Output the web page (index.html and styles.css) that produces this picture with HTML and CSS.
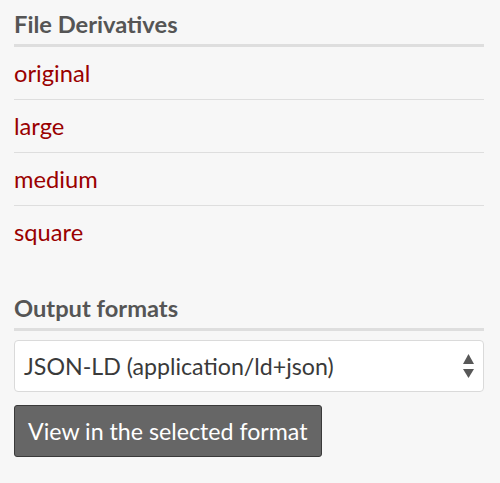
FILE: index.html
```html
<!DOCTYPE html>
<html lang="en">
<head>
<meta charset="utf-8">
<title>File Derivatives</title>
<link rel="stylesheet" href="styles.css">
</head>
<body>
<div class="panel">
  <section class="block">
    <h2 class="block-title">File Derivatives</h2>
    <ul class="derivs">
      <li class="deriv"><a href="#">original</a></li>
      <li class="deriv"><a href="#">large</a></li>
      <li class="deriv"><a href="#">medium</a></li>
      <li class="deriv"><a href="#">square</a></li>
    </ul>
  </section>
  <section class="block">
    <h2 class="block-title">Output formats</h2>
    <form class="format-form">
      <div class="select-wrap">
        <div class="select">JSON-LD (application/ld+json)</div>
        <svg class="arrows" width="11" height="25" viewBox="0 0 11 25"><polygon points="5.5,0 11,10 0,10" fill="#585858"/><polygon points="0,15 11,15 5.5,24" fill="#585858"/></svg>
      </div>
      <div class="actions"><button type="button" class="btn">View in the selected format</button></div>
    </form>
  </section>
</div>
</body>
</html>
```
FILE: styles.css
```css
html, body { margin: 0; padding: 0; }
body {
  background: #f7f7f7;
  font-family: Lato, "Open Sans", sans-serif;
  width: 500px;
  height: 483px;
  overflow: hidden;
}
.panel { padding: 10px 16px 0 14px; display: flex; flex-direction: column; gap: 36px; }
.block-title {
  margin: 0;
  font-size: 23.7px;
  font-weight: 700;
  color: #555;
  line-height: 28px;
  padding-bottom: 6px;
  border-bottom: 3px solid #dedede;
}
.derivs { list-style: none; margin: 0; padding: 0; }
.deriv {
  height: 52px;
  display: flex;
  align-items: center;
  border-bottom: 1px solid #dedede;
}
.deriv:last-child { border-bottom: none; }
.deriv a { color: #9a0000; text-decoration: none; font-size: 23.7px; }
.format-form { display: flex; flex-direction: column; gap: 13px; margin-top: 9px; }
.select-wrap { position: relative; }
.select {
  box-sizing: border-box;
  height: 52px;
  background: #fff;
  border: 1px solid #dadada;
  border-radius: 4px;
  display: flex;
  align-items: center;
  padding-left: 9px;
  font-size: 23.2px;
  color: #3a3a3a;
}
.arrows { position: absolute; right: 10px; top: 14px; }
.btn {
  height: 52px;
  background: #666;
  color: #fff;
  border: 1px solid #3a3a3a;
  border-radius: 3px;
  font-family: inherit;
  font-size: 23.2px;
  padding: 0 13px;
}
```
